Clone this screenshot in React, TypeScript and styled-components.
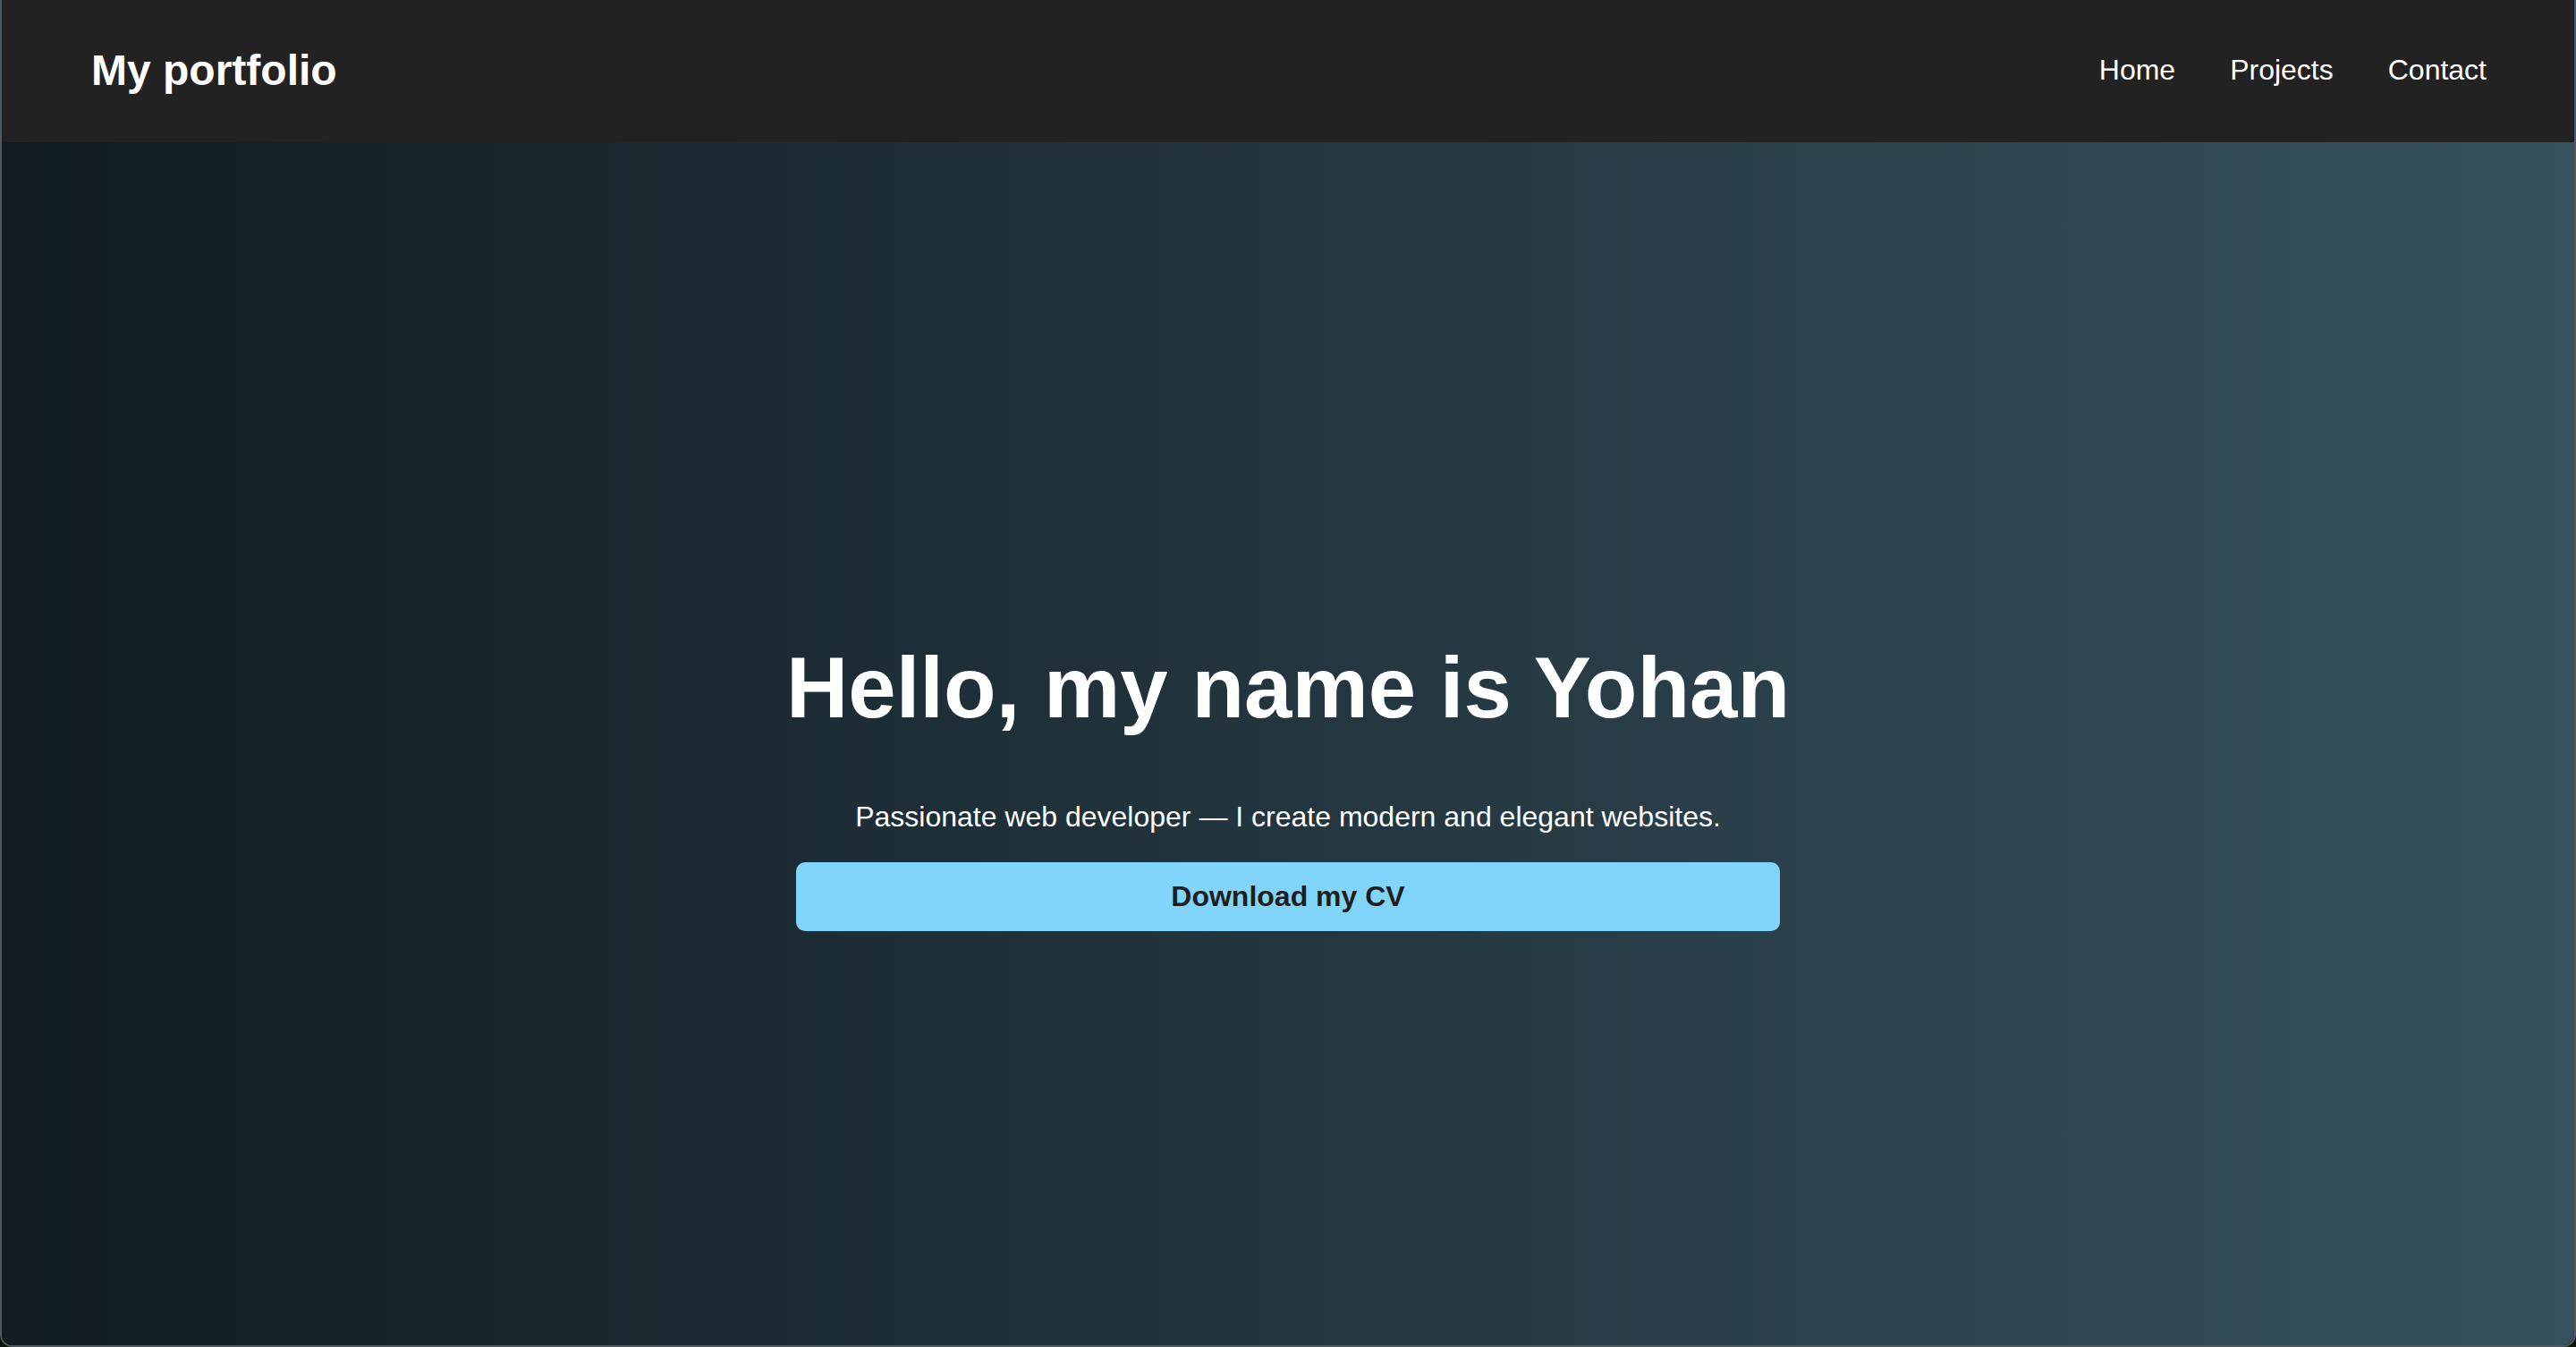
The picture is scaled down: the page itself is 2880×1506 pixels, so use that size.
import React from 'react';
import styled, { createGlobalStyle } from 'styled-components';

const GlobalStyle = createGlobalStyle`
  html, body {
    margin: 0;
    padding: 0;
    height: 100%;
    background: #0b1409;
    overflow: hidden;
  }

  #root {
    height: 100%;
  }

  * {
    box-sizing: border-box;
  }
`;

const Frame = styled.div`
  height: 100vh;
  display: flex;
  flex-direction: column;
  font-family: 'Liberation Sans', Arial, Helvetica, sans-serif;
  color: #fff;
  border: 2px solid #4f5a60;
  border-top: none;
  border-radius: 0 0 14px 14px;
  overflow: hidden;
`;

const Header = styled.header`
  height: 159px;
  flex-shrink: 0;
  display: flex;
  align-items: center;
  justify-content: space-between;
  padding: 0 98px 2px 100px;
  background: #222222;
`;

const Logo = styled.h1`
  margin: 0;
  font-size: 48px;
  font-weight: 700;
`;

const Nav = styled.nav`
  display: flex;
  align-items: center;
  gap: 61px;
`;

const NavLink = styled.a`
  color: #fff;
  text-decoration: none;
  font-size: 32px;
  cursor: pointer;

  &:hover {
    opacity: 0.8;
  }
`;

const Hero = styled.section`
  flex: 1;
  display: flex;
  flex-direction: column;
  align-items: center;
  justify-content: center;
  padding-top: 92px;
  background: linear-gradient(90deg, #111c23 0%, #23353e 50%, #36525f 100%);
  text-align: center;
`;

const Title = styled.h2`
  margin: 0;
  font-size: 96px;
  font-weight: 700;
  line-height: 1.15;
`;

const Subtitle = styled.p`
  margin: 71px 0 0;
  font-size: 32px;
  line-height: 1.15;
`;

const CvButton = styled.button`
  margin-top: 32px;
  width: 1100px;
  padding: 20px 0;
  border: none;
  border-radius: 10px;
  background: #81d4fa;
  color: #1e1e1e;
  font-family: inherit;
  font-size: 32px;
  font-weight: 700;
  line-height: 1.15;
  cursor: pointer;

  &:hover {
    opacity: 0.9;
  }
`;

const links = ['Home', 'Projects', 'Contact'];

const App: React.FC = () => {
  return (
    <>
      <GlobalStyle />
      <Frame>
        <Header>
          <Logo>My portfolio</Logo>
          <Nav>
            {links.map(link => (
              <NavLink key={link}>{link}</NavLink>
            ))}
          </Nav>
        </Header>
        <Hero>
          <Title>Hello, my name is Yohan</Title>
          <Subtitle>Passionate web developer — I create modern and elegant websites.</Subtitle>
          <CvButton>Download my CV</CvButton>
        </Hero>
      </Frame>
    </>
  );
};

export default App;
